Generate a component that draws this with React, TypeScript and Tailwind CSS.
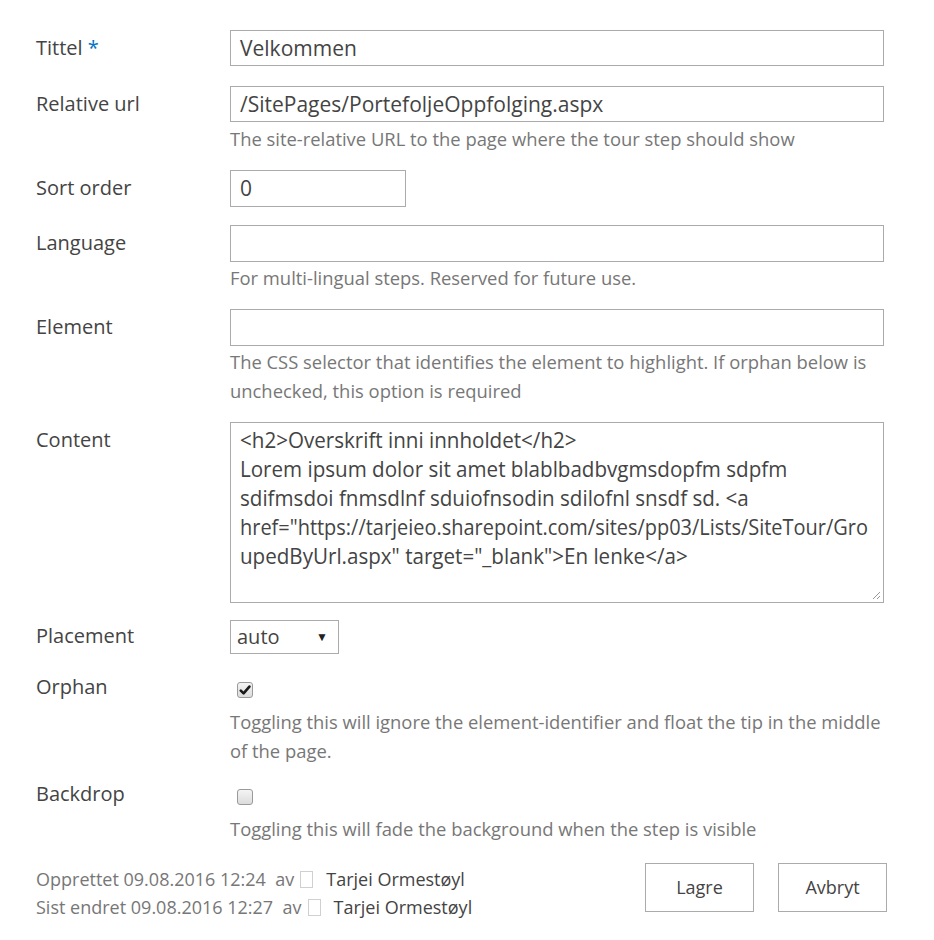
import React from 'react';

const labelCls = "w-[194px] shrink-0 text-[20px] text-[#444]";
const inputCls = "h-[36px] border border-[#ababab] bg-white px-[9px] text-[21px] text-[#444] leading-[34px]";
const descCls = "text-[18.4px] leading-[29px] text-[#777]";

function Row({ label, required, top, labelTop = 0, children }: { label: string; required?: boolean; top: number; labelTop?: number; children: React.ReactNode }) {
  return (
    <div className="flex" style={{ marginTop: top }}>
      <div className={labelCls} style={{ paddingTop: labelTop }}>
        {label}
        {required && <span className="text-[#0072c6]"> *</span>}
      </div>
      <div className="w-[654px]">{children}</div>
    </div>
  );
}

function Check({ checked }: { checked?: boolean }) {
  return (
    <div className="ml-[7px] w-[16px] h-[16px] rounded-[3px] border border-[#9a9a9a] bg-gradient-to-b from-[#f4f4f4] to-[#dcdcdc] flex items-center justify-center">
      {checked && (
        <svg width="12" height="12" viewBox="0 0 12 12">
          <path d="M1.8 6.6 L4.6 9.4 L10.4 2.6" fill="none" stroke="#1a1a1a" strokeWidth="2.6" strokeLinecap="round" strokeLinejoin="round" />
        </svg>
      )}
    </div>
  );
}

const contentLines = [
  { text: '<h2>Overskrift inni innholdet</h2>', cls: 'scale-x-[0.98]' },
  { text: 'Lorem ipsum dolor sit amet blablbadbvgmsdopfm sdpfm', cls: 'scale-x-[0.98]' },
  { text: 'sdifmsdoi fnmsdlnf sduiofnsodin sdilofnl snsdf sd. <a', cls: 'scale-x-[0.98]' },
  { text: 'href="https://tarjeieo.sharepoint.com/sites/pp03/Lists/SiteTour/Gro', cls: 'scale-x-[0.95]' },
  { text: 'upedByUrl.aspx" target="_blank">En lenke</a>', cls: 'scale-x-[0.98]' },
];

function Presence() {
  return <span className="inline-block w-[13px] h-[17px] border border-[#d0d0d0] ml-[6px] mr-[13px]" />;
}

export default function App() {
  return (
    <div className="w-[934px] h-[940px] bg-white font-['Open_Sans',sans-serif] overflow-hidden">
      <div className="pl-[36px] pt-[30px]">
        <Row label="Tittel" required top={0} labelTop={3}>
          <div className={inputCls}>Velkommen</div>
        </Row>

        <Row label="Relative url" top={20} labelTop={3}>
          <div className={inputCls}>/SitePages/PortefoljeOppfolging.aspx</div>
          <div className={descCls + " mt-[2px]"}>The site-relative URL to the page where the tour step should show</div>
        </Row>

        <Row label="Sort order" top={17} labelTop={3}>
          <div className={inputCls + " w-[176px] h-[37px]"}>0</div>
        </Row>

        <Row label="Language" top={18} labelTop={3}>
          <div className={inputCls + " h-[37px]"}></div>
          <div className={descCls + " mt-[1px]"}>For multi-lingual steps. Reserved for future use.</div>
        </Row>

        <Row label="Element" top={17} labelTop={3}>
          <div className={inputCls + " h-[37px]"}></div>
          <div className={descCls + " mt-[1px]"}>
            The CSS selector that identifies the element to highlight. If orphan below is
            <br />
            unchecked, this option is required
          </div>
        </Row>

        <Row label="Content" top={17} labelTop={3}>
          <div className="relative h-[181px] border border-[#ababab] bg-white pl-[9px] pt-[3px] overflow-hidden">
            {contentLines.map((l, i) => (
              <div key={i} className={"whitespace-pre text-[21px] leading-[29px] text-[#444] origin-left " + l.cls}>
                {l.text}
              </div>
            ))}
            <svg className="absolute right-[2px] bottom-[2px]" width="10" height="10" viewBox="0 0 10 10">
              <path d="M9 2 L2 9 M9 6 L6 9" stroke="#999" strokeWidth="1" />
            </svg>
          </div>
        </Row>

        <Row label="Placement" top={17} labelTop={1}>
          <div className="w-[109px] h-[34px] border border-[#ababab] bg-white flex items-center justify-between pl-[6px] pr-[10px] text-[20px] text-[#444]">
            <span>auto</span>
            <span className="text-[12px] text-[#222]">▼</span>
          </div>
        </Row>

        <Row label="Orphan" top={18} labelTop={0}>
          <div className="pt-[10px]">
            <Check checked />
          </div>
          <div className={descCls + " mt-[9px]"}>
            Toggling this will ignore the element-identifier and float the tip in the middle
            <br />
            of the page.
          </div>
        </Row>

        <Row label="Backdrop" top={14} labelTop={0}>
          <div className="pt-[10px]">
            <Check />
          </div>
          <div className={descCls + " mt-[9px]"}>Toggling this will fade the background when the step is visible</div>
        </Row>

        <div className="flex mt-[18px] w-[851px] justify-between">
          <div className="pt-[4px] text-[18px] leading-[28px] text-[#777] whitespace-nowrap">
            <div className="flex items-center">
              Opprettet 09.08.2016 12:24&nbsp;&nbsp;av
              <Presence />
              <span className="text-[#444]">Tarjei Ormestøyl</span>
            </div>
            <div className="flex items-center">
              Sist endret 09.08.2016 12:27&nbsp;&nbsp;av
              <Presence />
              <span className="text-[#444]">Tarjei Ormestøyl</span>
            </div>
          </div>
          <div className="flex gap-[24px] pt-[2px]">
            <button className="w-[109px] h-[49px] border border-[#ababab] bg-white text-[18px] text-[#444]">Lagre</button>
            <button className="w-[109px] h-[49px] border border-[#ababab] bg-white text-[18px] text-[#444]">Avbryt</button>
          </div>
        </div>
      </div>
    </div>
  );
}
